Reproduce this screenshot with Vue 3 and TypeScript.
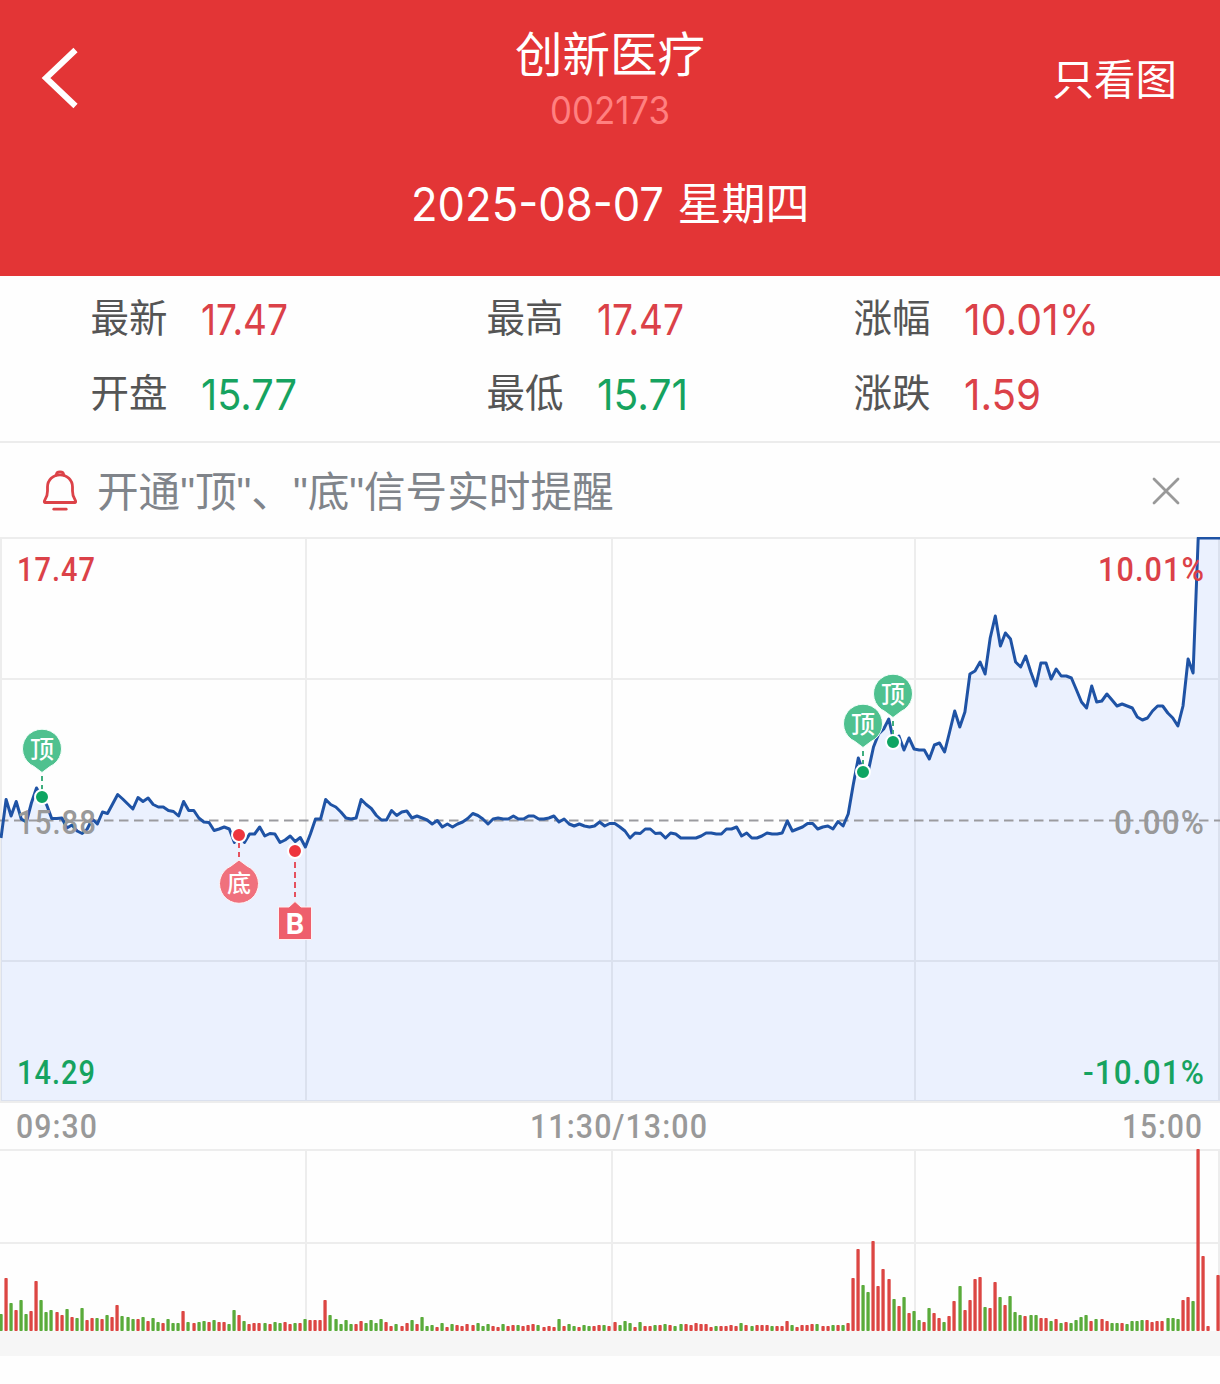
<script setup lang="ts">
import { h, type FunctionalComponent } from 'vue'

interface FitProps { text: string; w: number; size: number }

// Number set to an exact width, vertically centred on its cap height
const FitNumber: FunctionalComponent<FitProps> = (p) =>
  h('svg', { width: p.w, height: p.size, style: 'display:block;overflow:visible' }, [
    h('text', {
      x: 0,
      y: p.size * 0.863,
      textLength: p.w,
      lengthAdjust: 'spacingAndGlyphs',
      fill: 'currentColor',
      'font-size': p.size,
      'font-family': 'Inter, "Liberation Sans", sans-serif',
    }, p.text),
  ])
FitNumber.props = ['text', 'w', 'size']

interface Stat { label: string; value: string; w: number; tone: 'up' | 'down' }
const columns: Stat[][] = [
  [
    { label: '最新', value: '17.47', w: 87, tone: 'up' },
    { label: '开盘', value: '15.77', w: 96, tone: 'down' },
  ],
  [
    { label: '最高', value: '17.47', w: 87, tone: 'up' },
    { label: '最低', value: '15.71', w: 91, tone: 'down' },
  ],
  [
    { label: '涨幅', value: '10.01%', w: 135, tone: 'up' },
    { label: '涨跌', value: '1.59', w: 77, tone: 'up' },
  ],
]

const step = 5.0729
const xAt = (i: number) => +(1 + i * step).toFixed(1)
const gridX = [1, 306, 612, 915, 1219]

// One value per trading minute, as chart heights measured from the page top
const prices: number[] = [
  838, 799.5, 816, 801.5, 819, 822, 803, 788, 797, 805, 818.5, 818.5, 818, 828, 825, 831, 833.5, 829, 819, 824,
  812, 813.5, 804, 794.5, 799, 804, 809, 797.5, 801.5, 798, 804.5, 807, 807, 810.5, 811.5, 816, 801.5, 810.5, 810.5, 818,
  822, 822.5, 830.5, 829, 827, 829, 842.5, 835, 842.5, 834, 834, 827, 836, 833.5, 834, 842.5, 840, 836, 841.5, 837.5,
  847, 834, 819, 819, 799.5, 804.5, 807, 812, 818, 819, 818, 799.5, 804.5, 808.5, 815.5, 820, 820, 810.5, 815.5, 812,
  811, 818, 816, 818, 820, 824, 820.5, 827, 824, 827, 824, 822, 818.5, 813.5, 815.5, 819, 824, 819, 818, 819,
  819, 816, 819, 819, 816, 816, 819, 819, 818, 816, 822, 819, 824, 826, 824, 826, 827, 826, 822, 826,
  823.5, 823.5, 827, 831, 838, 833, 833.5, 829, 829, 833.5, 833, 838, 833, 834, 838, 838, 838, 838, 836, 833,
  833, 834, 834, 829, 829, 827, 836, 833, 838, 838, 836, 833, 834, 834, 833, 821, 831, 829, 827, 823.5,
  823.5, 829, 827, 826, 829, 821.5, 826, 814, 785, 758, 772, 770, 747, 734, 729, 719, 742, 736, 750, 738,
  749, 750, 750, 759, 745, 743, 752, 732, 711, 727, 712, 674, 671, 662, 674, 638, 616, 646, 633, 639,
  662, 667, 656, 672, 686, 663, 663, 679, 669, 676, 676, 678, 690, 702, 708, 686, 702, 701, 694, 700,
  706, 704, 706, 708, 717, 720, 718, 711, 706, 706, 713, 718, 726, 706, 659, 673, 538, 538, 538, 538,
  538,
]
const line = prices.map((y, i) => `${xAt(i)},${y}`).join(' ')
const area = `1,1101 ${line} 1220,538 1220,1101`

const volumes = (
  'g17 r53 g28 r21 g31 g17 r20 r50 g31 g19 g21 r19 r16 g22 r14 g13 g23 r11 r13 g13 ' +
  'r12 g16 r14 r26 g15 g14 g12 r12 g14 r10 g13 g9 r8 g12 g8 g8 r20 g9 r8 g9 ' +
  'g10 r9 g11 r9 r9 g7 g21 r16 g10 r7 r8 r8 g8 r7 g9 g8 r9 r7 g8 r8 ' +
  'g12 r11 r11 r11 r31 g16 g12 g7 g11 g7 r7 r10 g8 g11 g8 g12 r9 r5 g7 r5 ' +
  'r8 g11 r7 g14 g5 g6 r4 g8 r4 g7 r6 r5 r7 r6 g8 g5 g7 r5 r4 g7 ' +
  'r5 r6 g6 r5 r6 r7 g6 r4 r5 r4 g12 r5 g7 g5 r4 g6 g5 r5 r6 g6 ' +
  'r5 r9 g6 g10 g8 r4 g9 r5 r5 g6 r6 g7 r6 g5 g7 r7 r6 r8 r7 r7 ' +
  'r4 g5 r5 r5 r6 r5 g8 r6 g5 r6 r6 r6 g5 r5 r5 r10 g6 r4 r6 r6 ' +
  'r7 g7 r5 r5 g6 r6 g6 r8 r53 r82 g46 g39 r90 r45 r62 r52 g32 r25 g34 r18 ' +
  'g20 g11 r9 g23 r18 r13 g9 r15 r30 g45 r21 r31 r52 r54 g24 r23 r49 g34 r26 g35 ' +
  'g19 g16 r15 g16 g16 r13 r13 g10 r12 g8 r9 g8 g11 g14 g16 r10 g12 r12 r10 g8 ' +
  'g8 r8 g7 g10 g10 g11 r11 r9 r10 r10 g13 g13 g12 r31 r34 g30 r182 r75 r5 g0 r56'
).split(' ').map((v, i) => ({
  x: Math.round(xAt(i) - 0.3) - 1.6,
  height: Number(v.slice(1)),
  color: v[0] === 'r' ? '#dc4643' : '#5aab3b',
}))

const tops = [
  { x: 42, y: 797 },
  { x: 863, y: 772 },
  { x: 893, y: 742 },
]
</script>

<template>
  <main class="page">
    <header class="header">
      <div class="nav">
        <div class="side">
          <svg class="back" width="40" height="64" viewBox="0 0 40 64" fill="none" stroke="#fff" stroke-width="6">
            <path d="M35.500 4 L6 32 L35.500 60" />
          </svg>
        </div>
        <div class="heading">
          <h1>创新医疗</h1>
          <FitNumber class="code" text="002173" :w="120" :size="38" />
        </div>
        <div class="side action">只看图</div>
      </div>
      <div class="date">
        <FitNumber text="2025-08-07" :w="253" :size="46.500" />
        <span>星期四</span>
      </div>
    </header>

    <section class="stats">
      <div v-for="(col, i) in columns" :key="i" class="col">
        <div v-for="s in col" :key="s.label" class="stat">
          <span class="label">{{ s.label }}</span>
          <FitNumber :class="s.tone" :text="s.value" :w="s.w" :size="43" />
        </div>
      </div>
    </section>

    <section class="notice">
      <svg width="36" height="42" viewBox="0 0 36 42" fill="none" stroke="#dc4248" stroke-width="2.800" stroke-linecap="round" stroke-linejoin="round">
        <path d="M3 32.500 H33 C34 32.500 33.800 31 33 29.800 C31.200 27.200 30.500 25 30.500 21 V17 C30.500 10 25 4.800 18 4.800 C11 4.800 5.500 10 5.500 17 V21 C5.500 25 4.800 27.200 3 29.800 C2.200 31 2 32.500 3 32.500 Z" />
        <path d="M14.300 5 C14.500 0.800 21.500 0.800 21.700 5" />
        <path d="M11.800 39.200 H24.200" />
      </svg>
      <p>开通"顶"、"底"信号实时提醒</p>
      <svg class="close" width="28" height="28" viewBox="0 0 28 28" stroke="#999" stroke-width="2.800" stroke-linecap="round">
        <path d="M2 2 L26 26 M26 2 L2 26" />
      </svg>
    </section>

    <svg class="chart" width="1220" height="612" viewBox="0 537 1220 612">
      <g stroke="#ededed" stroke-width="2">
        <path d="M0 538 H1220 M0 679 H1220 M0 961 H1220" />
        <path d="M0 1101.500 H1220" stroke-width="3" />
        <path v-for="x in gridX" :key="x" :d="`M${x} 538 V1101`" />
      </g>
      <polygon :points="area" fill="rgba(30,105,250,0.085)" />
      <path d="M-1 820.500 H1220" stroke="#9b9b9f" stroke-width="2" stroke-dasharray="9.500 5.500" />
      <polyline :points="line + ' 1220,538'" fill="none" stroke="#1f53a5" stroke-width="3" stroke-linejoin="round" />

      <g class="axis">
        <text x="17" y="581" class="up" textLength="79" lengthAdjust="spacingAndGlyphs">17.47</text>
        <text x="1098" y="581" class="up" textLength="107" lengthAdjust="spacingAndGlyphs">10.01%</text>
        <text x="17" y="834" textLength="80" lengthAdjust="spacingAndGlyphs">15.88</text>
        <text x="1114" y="834" textLength="91" lengthAdjust="spacingAndGlyphs">0.00%</text>
        <text x="17" y="1084" class="down" textLength="79" lengthAdjust="spacingAndGlyphs">14.29</text>
        <text x="1083" y="1084" class="down" textLength="122" lengthAdjust="spacingAndGlyphs">-10.01%</text>
        <text x="16" y="1138" textLength="82" lengthAdjust="spacingAndGlyphs">09:30</text>
        <text x="530" y="1138" textLength="178" lengthAdjust="spacingAndGlyphs">11:30/13:00</text>
        <text x="1122" y="1138" textLength="81" lengthAdjust="spacingAndGlyphs">15:00</text>
      </g>

      <g v-for="t in tops" :key="t.x" :transform="`translate(${t.x} ${t.y})`">
        <path d="M0 -21 V-7" stroke="#3fae7e" stroke-width="2" stroke-dasharray="5 4" />
        <path d="M0 -24.500 L-8 -30.500 A19.500 19.500 0 1 1 8 -30.500 Z" fill="#4fc18f" stroke="#f3fffa" stroke-width="1" />
        <text class="pin" y="-39.500">顶</text>
        <circle r="7" fill="#0ea562" stroke="#fff" stroke-width="2" />
      </g>

      <g transform="translate(239 835)">
        <path d="M0 8 V24" stroke="#e5525f" stroke-width="2" stroke-dasharray="5 4" />
        <path d="M0 25 L-8 31 A19.500 19.500 0 1 0 8 31 Z" fill="#f0717d" stroke="#fff5f6" stroke-width="1" />
        <text class="pin" y="57">底</text>
        <circle r="7" fill="#ee363e" stroke="#fff" stroke-width="2" />
      </g>

      <g transform="translate(295 851)">
        <path d="M0 11 V46" stroke="#e5525f" stroke-width="2" stroke-dasharray="6 4" />
        <path d="M0 50.500 L6 56 H16.500 V88.500 H-16.500 V56 H-6 Z" fill="#ee5f6c" stroke="#fff0f2" stroke-width="1" />
        <text class="buy" y="82.500">B</text>
        <circle r="7" fill="#ee363e" stroke="#fff" stroke-width="2" />
      </g>
    </svg>

    <svg class="volume" width="1220" height="182" viewBox="0 0 1220 182">
      <g stroke="#ededed" stroke-width="2">
        <path d="M0 1 H1220 M0 94 H1220" />
        <path v-for="x in gridX.slice(1)" :key="x" :d="`M${x} 0 V182`" />
      </g>
      <rect v-for="(b, i) in volumes" :key="i" :x="b.x" :y="182 - b.height" width="3.300" :height="b.height" rx="0.800" :fill="b.color" />
    </svg>
    <div class="divider"></div>
  </main>
</template>

<style>
body { margin: 0; background: #fff; }
</style>

<style scoped>
.page {
  width: 1220px;
  height: 1384px;
  background: #fefefe;
  font-family: "Noto Sans CJK SC", sans-serif;
  overflow: hidden;
}
.header { height: 276px; background: #e33536; color: #fff; }
.nav { display: flex; height: 156px; }
.side { flex: 1; display: flex; align-items: center; box-sizing: border-box; padding-left: 40px; }
.action { justify-content: flex-end; padding: 0 43px 3px 0; font-size: 41.5px; line-height: 56px; }
.heading { display: flex; flex-direction: column; align-items: center; padding: 24px 0 0 3px; }
h1 { margin: 0; font-size: 47.5px; font-weight: 400; line-height: 56px; }
.code { margin-top: 11px; color: #ff8080; }
.date { display: flex; align-items: center; justify-content: center; gap: 14px; height: 96px; }
.date span { font-size: 44px; line-height: 60px; position: relative; top: -3px; }

.stats { display: flex; height: 165px; border-bottom: 2px solid #ececec; }
.col { padding: 3px 0 0 90.5px; width: 305.5px; }
.col:last-child { padding-left: 61.5px; }
.stat { display: flex; align-items: center; gap: 33.5px; height: 75px; }
.label { font-size: 38.5px; line-height: 56px; color: #555; position: relative; top: -1.5px; }
.stat svg { margin-top: 5px; }
.up { color: #db4148; }
.down { color: #16a360; }

.notice { display: flex; align-items: center; box-sizing: border-box; height: 94px; padding: 2px 40px 0 42px; }
.notice p { flex: 1; margin: 4px 0 0 19px; color: #80848a; font-family: "Liberation Sans", "Noto Sans CJK SC", sans-serif; font-size: 41.6px; line-height: 60px; white-space: nowrap; }
.chart, .volume { display: block; }
.axis { font: 500 33.5px Roboto, sans-serif; fill: #999; letter-spacing: 1.2px; }
.axis .up { fill: #db4148; }
.axis .down { fill: #16a360; }
.pin { fill: #fff; font-size: 24px; font-weight: 500; text-anchor: middle; }
.buy { fill: #fff; font: 700 29px Roboto, sans-serif; text-anchor: middle; }
.divider { height: 25px; background: #f6f6f6; }
</style>
